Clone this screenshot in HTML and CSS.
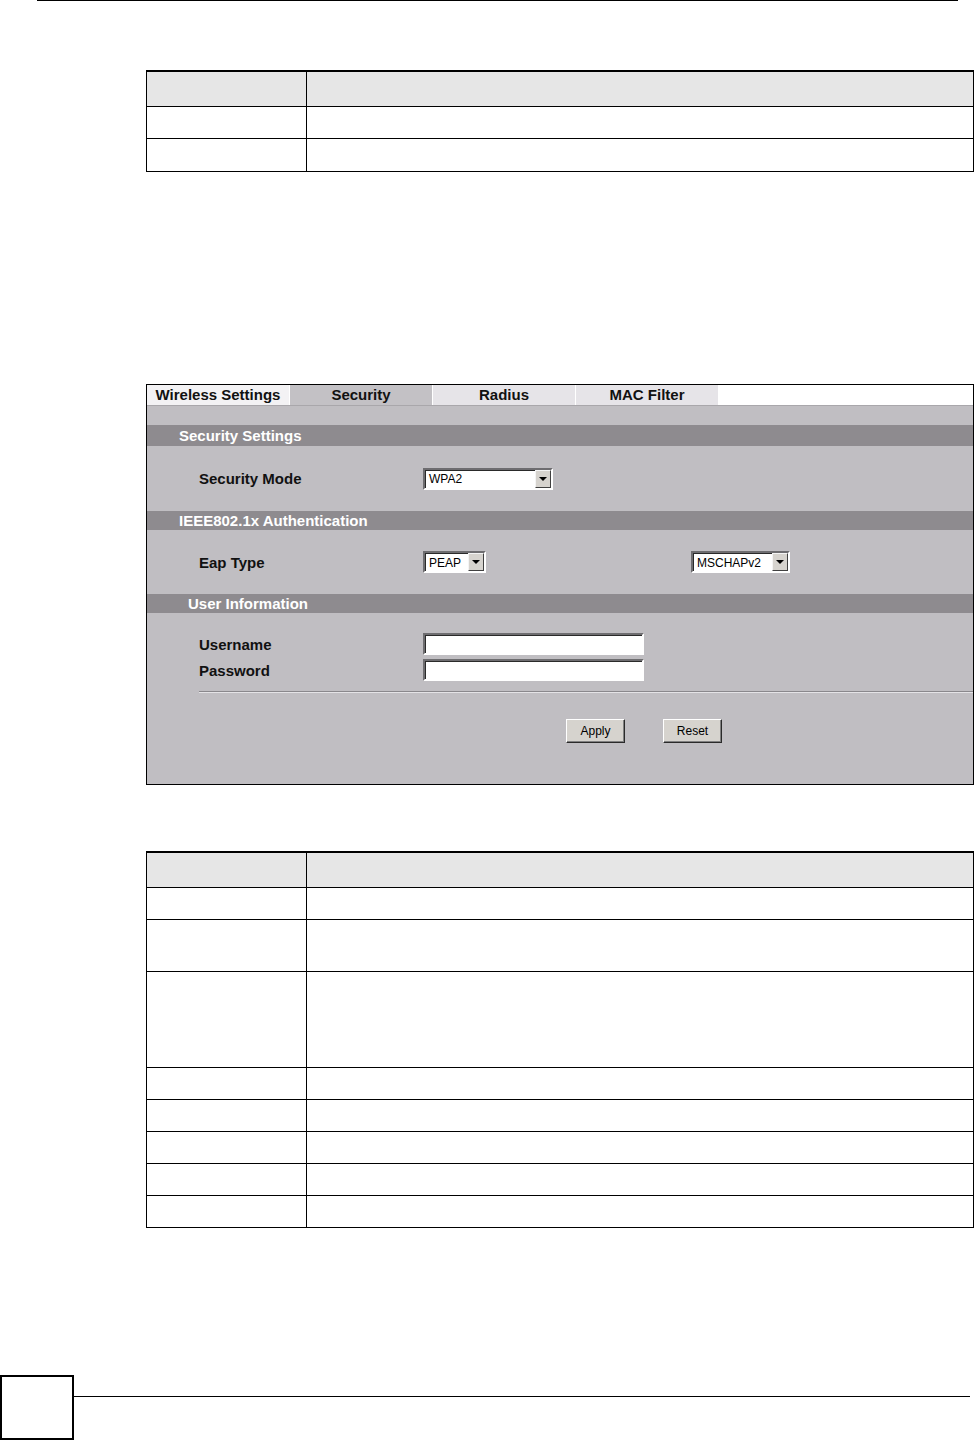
FILE: index.html
```html
<!DOCTYPE html>
<html lang="en">
<head>
    <meta charset="UTF-8">
    <title>Wireless Security</title>
    <link rel="stylesheet" href="styles.css">
</head>
<body>
    <div class="top-rule"></div>

    <div class="content">
        <!-- first field table (text not shown) -->
        <table class="ref-table first">
            <colgroup><col class="col-label"><col></colgroup>
            <tr class="head"><td></td><td></td></tr>
            <tr class="r32"><td></td><td></td></tr>
            <tr class="r33"><td></td><td></td></tr>
        </table>

        <!-- Screenshot of the Security screen -->
        <div class="shot">
            <div class="tabs">
                <div class="tab tab-first">Wireless Settings</div>
                <div class="tab tab-active">Security</div>
                <div class="tab">Radius</div>
                <div class="tab">MAC Filter</div>
            </div>

            <div class="shot-body">
                <div class="band">Security Settings</div>
                <div class="form-row row-mode">
                    <div class="label">Security Mode</div>
                    <div class="select select-mode">
                        <span class="select-value">WPA2</span>
                        <span class="select-arrow"><span class="tri"></span></span>
                    </div>
                </div>

                <div class="band band-small">IEEE802.1x Authentication</div>
                <div class="form-row row-eap">
                    <div class="label">Eap Type</div>
                    <div class="select select-peap">
                        <span class="select-value">PEAP</span>
                        <span class="select-arrow"><span class="tri"></span></span>
                    </div>
                    <div class="select select-inner">
                        <span class="select-value">MSCHAPv2</span>
                        <span class="select-arrow"><span class="tri"></span></span>
                    </div>
                </div>

                <div class="band band-small band-user">User Information</div>
                <div class="user-rows">
                    <div class="form-row row-user">
                        <div class="label">Username</div>
                        <input type="text" class="text-input">
                    </div>
                    <div class="form-row row-user">
                        <div class="label">Password</div>
                        <input type="password" class="text-input">
                    </div>
                </div>

                <div class="groove"></div>

                <div class="buttons">
                    <button type="button" class="win-btn">Apply</button>
                    <button type="button" class="win-btn">Reset</button>
                </div>
            </div>
        </div>

        <!-- second field table (text not shown) -->
        <table class="ref-table second">
            <colgroup><col class="col-label"><col></colgroup>
            <tr class="head"><td></td><td></td></tr>
            <tr class="r32"><td></td><td></td></tr>
            <tr class="r52"><td></td><td></td></tr>
            <tr class="r96"><td></td><td></td></tr>
            <tr class="r32"><td></td><td></td></tr>
            <tr class="r32"><td></td><td></td></tr>
            <tr class="r32"><td></td><td></td></tr>
            <tr class="r32"><td></td><td></td></tr>
            <tr class="r32"><td></td><td></td></tr>
        </table>
    </div>

    <footer class="page-foot">
        <div class="page-num"></div>
        <div class="foot-line"></div>
    </footer>
</body>
</html>
```

FILE: styles.css
```css
body {
    margin: 0;
    padding: 0;
    background-color: #fff;
    color: #000;
    font-family: "Liberation Sans", Arial, sans-serif;
}

.top-rule {
    margin-left: 37px;
    width: 921px;
    border-top: 1px solid #000;
}

.content {
    padding-left: 146px;
    width: 828px;
}

/* reference tables */
.ref-table {
    width: 828px;
    border-collapse: collapse;
    table-layout: fixed;
}

.ref-table td {
    border: 1px solid #000;
    padding: 0;
}

.ref-table tr:first-child td {
    border-top-width: 2px;
}

.ref-table .head td {
    background-color: #e6e6e6;
    height: 34px;
}

.col-label {
    width: 160px;
}

.r32 td { height: 31px; }
.r33 td { height: 32px; }
.r52 td { height: 51px; }
.r96 td { height: 95px; }

.first {
    margin-top: 69px;
}

.second {
    margin-top: 66px;
}

/* screenshot */
.shot {
    margin-top: 212px;
    border: 1px solid #000;
    background-color: #c0bec2;
    height: 399px;
}

.tabs {
    display: flex;
    height: 20px;
    background-color: #fff;
}

.tab {
    width: 142px;
    margin-right: 1px;
    background-color: #e6e4e8;
    font-size: 15px;
    font-weight: bold;
    line-height: 19px;
    text-align: center;
    color: #111;
}

.tab-first {
    background-color: #f3f2f4;
}

.tab-active {
    background-color: #c3c1c5;
}

.shot-body {
    border-top: 1px solid #a9a7ab;
    padding-top: 19px;
}

.band {
    height: 21px;
    line-height: 21px;
    background-color: #8e8b8f;
    color: #fff;
    font-size: 15px;
    font-weight: bold;
    padding-left: 32px;
}

.band-small {
    height: 19px;
    line-height: 19px;
}

.band-user {
    padding-left: 41px;
}

.form-row {
    display: flex;
    align-items: center;
    padding-left: 52px;
}

.label {
    width: 224px;
    font-size: 15px;
    font-weight: bold;
    color: #111;
}

.row-mode {
    height: 65px;
}

.row-eap {
    height: 64px;
}

/* fake windows select */
.select {
    display: flex;
    align-items: center;
    box-sizing: border-box;
    height: 22px;
    background-color: #fff;
    border: 2px solid;
    border-color: #6e6d70 #fff #fff #6e6d70;
    box-shadow: inset 1px 1px 0 #2a2a2a;
    font-size: 12px;
}

.select-value {
    flex: 1;
    padding-left: 4px;
    padding-top: 1px;
}

.select-arrow {
    display: flex;
    align-items: center;
    justify-content: center;
    box-sizing: border-box;
    width: 16px;
    height: 18px;
    background-color: #d6d3ce;
    border: 1px solid;
    border-color: #f4f4f4 #404040 #404040 #f4f4f4;
}

.tri {
    width: 0;
    height: 0;
    border-left: 4px solid transparent;
    border-right: 4px solid transparent;
    border-top: 4px solid #000;
}

.select-mode {
    width: 130px;
}

.select-peap {
    width: 63px;
}

.select-inner {
    width: 99px;
    margin-left: 205px;
}

.user-rows {
    padding-top: 20px;
    display: flex;
    flex-direction: column;
    gap: 4px;
}

.row-user {
    height: 22px;
}

.text-input {
    box-sizing: border-box;
    width: 221px;
    height: 22px;
    margin: 0;
    padding: 0 3px;
    background-color: #fff;
    border: 2px solid;
    border-color: #6e6d70 #fff #fff #6e6d70;
    box-shadow: inset 1px 1px 0 #2a2a2a;
    outline: none;
}

.groove {
    margin-top: 10px;
    margin-left: 52px;
    border-top: 1px solid #8a888c;
    border-bottom: 1px solid #e4e3e6;
}

.buttons {
    display: flex;
    gap: 38px;
    padding-left: 419px;
    margin-top: 26px;
}

.win-btn {
    box-sizing: border-box;
    width: 59px;
    height: 24px;
    padding: 0;
    background-color: #d6d3ce;
    border: 1px solid;
    border-color: #fff #2a2a2a #2a2a2a #fff;
    box-shadow: inset -1px -1px 0 #808080;
    font-family: "Liberation Sans", Arial, sans-serif;
    font-size: 12px;
    color: #000;
}

/* page footer */
.page-foot {
    display: flex;
    margin-top: 147px;
}

.page-num {
    box-sizing: border-box;
    width: 74px;
    height: 65px;
    border: 2px solid #000;
}

.foot-line {
    flex: 1;
    margin-top: 21px;
    margin-right: 5px;
    height: 0;
    border-top: 1px solid #000;
}
```
